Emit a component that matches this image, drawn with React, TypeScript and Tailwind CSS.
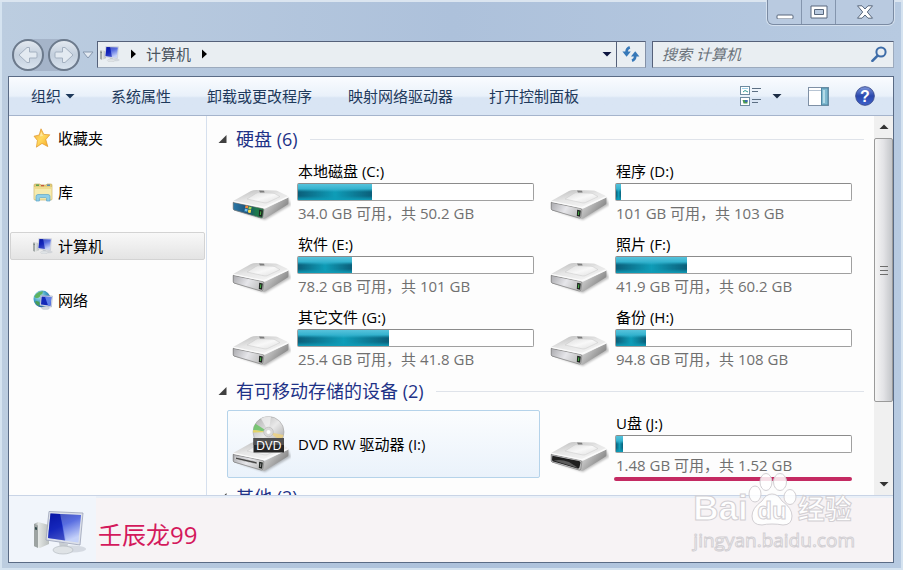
import React from "react";
import clsx from "clsx";

type DriveKind = "system" | "disk" | "removable" | "dvd";

interface Drive {
  name: string;
  kind: DriveKind;
  used?: number;
  info?: string;
  hovered?: boolean;
  marked?: boolean;
}

const hardDisks: Drive[] = [
  { name: "本地磁盘 (C:)", kind: "system", used: 31.5, info: "34.0 GB 可用，共 50.2 GB" },
  { name: "程序 (D:)", kind: "disk", used: 2, info: "101 GB 可用，共 103 GB" },
  { name: "软件 (E:)", kind: "disk", used: 23, info: "78.2 GB 可用，共 101 GB" },
  { name: "照片 (F:)", kind: "disk", used: 30, info: "41.9 GB 可用，共 60.2 GB" },
  { name: "其它文件 (G:)", kind: "disk", used: 38.8, info: "25.4 GB 可用，共 41.8 GB" },
  { name: "备份 (H:)", kind: "disk", used: 12.8, info: "94.8 GB 可用，共 108 GB" },
];

const removable: Drive[] = [
  { name: "DVD RW 驱动器 (I:)", kind: "dvd", hovered: true },
  { name: "U盘 (J:)", kind: "removable", used: 3, info: "1.48 GB 可用，共 1.52 GB", marked: true },
];

/* ---------- Icons ---------- */

const ComputerIcon = ({ className }: { className?: string }) => (
  <svg viewBox="0 0 54 44" className={className} aria-hidden="true">
    <defs>
      <linearGradient id="screen" x1="0" y1="0" x2="0.5" y2="1">
        <stop offset="0" stopColor="#0a1a9c" />
        <stop offset="0.5" stopColor="#2a45d8" />
        <stop offset="1" stopColor="#b4c4f8" />
      </linearGradient>
      <linearGradient id="tower" x1="0" y1="0" x2="1" y2="0">
        <stop offset="0" stopColor="#8e9494" />
        <stop offset="0.3" stopColor="#e4e7e5" />
        <stop offset="1" stopColor="#b9bebd" />
      </linearGradient>
    </defs>
    <ellipse cx="39" cy="38" rx="14" ry="3.5" fill="#b9c0ca" opacity="0.5" />
    <path d="M1 13 L5 11 L16 14 L16 33 L7 37 L1 35 Z" fill="url(#tower)" />
    <path d="M1 13 L5 14.5 L5 37 L1 35 Z" fill="#9da3a2" />
    <path d="M2 16 L4 16.6 L4 19 L2 18.4 Z" fill="#31494a" />
    <path d="M26 31 L35 33 L34 38 L27 38 Z" fill="#c8cdd2" />
    <ellipse cx="30" cy="39" rx="10" ry="4" fill="#dfe3e6" stroke="#aeb5bb" strokeWidth="0.6" />
    <path d="M16 0.5 L50 2 L47 34 L13 29 Z" fill="#dde1ea" stroke="#9aa2b8" strokeWidth="0.8" />
    <path d="M17.5 2.5 L48 4 L45.3 31.5 L15 27 Z" fill="url(#screen)" />
    <path d="M27 3 L48 4 L45.3 31.5 L33 29.6 Z" fill="#ffffff" opacity="0.22" />
    <path d="M17.5 2.5 L27 3 L32 29.5 L15 27 Z" fill="#0612a8" opacity="0.6" />
  </svg>
);

const StarIcon = () => (
  <svg viewBox="0 0 20 20" className="size-5" aria-hidden="true">
    <defs>
      <linearGradient id="star" x1="0" y1="0" x2="1" y2="1">
        <stop offset="0" stopColor="#f3a93c" />
        <stop offset="0.5" stopColor="#ffd95e" />
        <stop offset="1" stopColor="#f5a21c" />
      </linearGradient>
    </defs>
    <path
      d="M8 0.8 L10.8 6.4 L16.8 6.8 L12.8 11.6 L14.8 18.6 L9 15.4 L3.4 19.2 L4.4 12.4 L1 8.2 L6.2 7 Z"
      fill="url(#star)"
      stroke="#e0962a"
      strokeWidth="0.7"
      strokeLinejoin="round"
    />
    <path d="M8.2 3.5 L10 8 L6.8 8.6 Z" fill="#ffeeb0" opacity="0.8" />
  </svg>
);

const LibraryIcon = () => (
  <svg viewBox="0 0 20 20" className="size-5" aria-hidden="true">
    <path d="M1 3 Q1 2 2 2 H7 L8 3 H13 L14 2 H18 Q19 2 19 3 V17 Q19 18 18 18 H2 Q1 18 1 17 Z" fill="#e3cd7d" stroke="#c3a859" strokeWidth="0.6" />
    <path d="M3 3.2 H6" stroke="#4f9c4d" strokeWidth="1.4" />
    <path d="M8 3.6 H11" stroke="#c75a3c" strokeWidth="1.4" />
    <path d="M14 3.2 H17" stroke="#4d86b8" strokeWidth="1.4" />
    <path d="M1.4 5 H18.6 V17 Q18.6 17.6 18 17.6 H2 Q1.4 17.6 1.4 17 Z" fill="#f6ebaf" />
    <path d="M1.4 5 H18.6 V7 H1.4 Z" fill="#eedc8f" />
    <path d="M3 19 V14.5 Q3 12.5 5 12.5 H15 Q17 12.5 17 14.5 V19 H13.6 V16.6 Q13.6 15.6 12.6 15.6 H7.4 Q6.4 15.6 6.4 16.6 V19 Z" fill="#8fcfe8" stroke="#5aa5c8" strokeWidth="0.7" />
  </svg>
);

const NetworkIcon = () => (
  <svg viewBox="0 0 20 20" className="size-5" aria-hidden="true">
    <defs>
      <radialGradient id="globe" cx="0.35" cy="0.3" r="0.8">
        <stop offset="0" stopColor="#c3ecf5" />
        <stop offset="0.5" stopColor="#3f9fc4" />
        <stop offset="1" stopColor="#1b4d8f" />
      </radialGradient>
    </defs>
    <circle cx="9" cy="9" r="8.5" fill="url(#globe)" />
    <path d="M3 4 Q6 1 10 1.2 Q10 4 7.5 5 Q7 8 4 8 Q2 8 1.4 6.5 Z" fill="#5cb260" />
    <path d="M3 11 Q6 11 7 13 Q6.6 15 5.6 16 Q3 14.4 2 12 Z" fill="#4a9e58" />
    <path d="M7.6 5.4 L19.4 6 L18.4 17 L7 15.4 Z" fill="#dfe5ee" stroke="#8e9ab5" strokeWidth="0.5" />
    <path d="M8.6 6.4 L18.4 7 L17.5 15.8 L8 14.5 Z" fill="#1429b8" />
    <path d="M12 6.7 L18.4 7 L17.5 15.8 L15 15.4 Z" fill="#5f7fe8" />
    <ellipse cx="12.5" cy="18" rx="4" ry="1.5" fill="#d5dadf" stroke="#aab2bb" strokeWidth="0.3" />
  </svg>
);

const DriveIcon = ({ kind }: { kind: DriveKind }) => (
  <svg viewBox="0 0 60 60" className="size-[60px] shrink-0" aria-hidden="true">
    <defs>
      <linearGradient id="driveTop" x1="0" y1="0" x2="0.6" y2="1">
        <stop offset="0" stopColor="#b9b9b9" />
        <stop offset="0.5" stopColor="#e6e6e6" />
        <stop offset="1" stopColor="#f4f4f4" />
      </linearGradient>
      <linearGradient id="driveLid" x1="0" y1="0" x2="1" y2="1">
        <stop offset="0" stopColor="#dcdcdc" />
        <stop offset="0.5" stopColor="#f8f8f8" />
        <stop offset="1" stopColor="#dedede" />
      </linearGradient>
      <linearGradient id="driveSide" x1="0" y1="0" x2="1" y2="0.3">
        <stop offset="0" stopColor="#6f6f6f" />
        <stop offset="0.25" stopColor="#a9a9a9" />
        <stop offset="0.6" stopColor="#d4d4d4" />
        <stop offset="1" stopColor="#8b8b8b" />
      </linearGradient>
      <linearGradient id="driveFront" x1="0" y1="0" x2="1" y2="0.3">
        <stop offset="0" stopColor="#a9a9ad" />
        <stop offset="0.55" stopColor="#e6e6ea" />
        <stop offset="1" stopColor="#c2c2c2" />
      </linearGradient>
      <linearGradient id="systemFront" x1="0" y1="0" x2="1" y2="0">
        <stop offset="0" stopColor="#2c78a8" />
        <stop offset="0.5" stopColor="#1a4f74" />
        <stop offset="0.75" stopColor="#1d7a4c" />
        <stop offset="1" stopColor="#2b6f46" />
      </linearGradient>
      <linearGradient id="disc" x1="0" y1="0" x2="1" y2="1">
        <stop offset="0" stopColor="#a9a9a9" />
        <stop offset="0.5" stopColor="#e9e9e9" />
        <stop offset="1" stopColor="#999999" />
      </linearGradient>
      <filter id="driveShadow" x="-20%" y="-20%" width="140%" height="140%">
        <feGaussianBlur stdDeviation="1" />
      </filter>
    </defs>
    <g transform="translate(0 26)">
      <path d="M6 23 L34 32 L60 17 L57 10 L30 26 Z" fill="#000" opacity="0.25" filter="url(#driveShadow)" />
      <path d="M2 14 Q2 13 3 12.4 L20 3 Q22 2 25 2 L44 2.6 Q46 2.7 47.5 3.4 L56 7.6 Q57.4 8.4 57.4 10 L33 20.6 Z" fill="url(#driveTop)" />
      <path d="M2 14 L33 20.6 Q34 20.8 35 20.2 L57.4 9.4 L57.4 15 Q57.4 16.2 56.4 16.8 L35 30 Q33.4 31 31.6 30.4 L3.4 22.4 Q2 22 2 20.6 Z" fill="url(#driveSide)" />
      <path d="M16 11 L25 5.4 Q26 4.8 27.5 4.8 L42 5.2 Q43 5.2 44 5.8 L49 8.6 L36.5 14.6 Q35 15.2 33.5 14.9 Z" fill="url(#driveLid)" stroke="#c9c9c9" strokeWidth="0.5" />
      <path d="M28 2.6 L33 2.8 L33.6 4.6 L29 4.4 Z" fill="#7d7d7d" />
      <path
        d="M2.2 14.4 L31.6 20.4 Q33 20.8 32.8 22.2 L31.8 29 Q31.6 30.4 30 30 L3.6 22.2 Q2.2 21.8 2.2 20.4 Z"
        fill={kind === "system" ? "url(#systemFront)" : "url(#driveFront)"}
        stroke="#808080"
        strokeWidth="0.7"
      />
      <path d="M2.4 13.4 L33 19.7 L57 8.8" fill="none" stroke="#fbfbfb" strokeWidth="1.3" strokeLinejoin="round" />
      {kind === "system" && (
        <g>
          <path d="M14.5 17.6 Q16 17 17.2 18 L16.8 20.6 Q15.4 19.8 14 20.2 Z" fill="#f08a3c" />
          <path d="M17.8 18.2 Q19.2 19.2 20.6 18.8 L20.2 21.4 Q18.8 21.8 17.4 20.9 Z" fill="#a5d84c" />
          <path d="M13.9 20.8 Q15.4 20.4 16.7 21.3 L16.3 23.8 Q15 23 13.5 23.4 Z" fill="#6cc1ee" />
          <path d="M17.3 21.5 Q18.7 22.4 20.1 22 L19.7 24.8 Q18.2 25.2 16.9 24.2 Z" fill="#fbdc4a" />
        </g>
      )}
      {kind === "removable" && (
        <g>
          <path d="M3.4 15.8 L30 21 Q31.8 21.4 31.5 22.8 L30.4 27.6 Q30 28.8 28.4 28.4 L4.4 21.6 Q3 21 3 19.6 Z" fill="#1f1f1f" />
          <path d="M4.6 20.6 Q12 19 20 22 L28.6 27.4 Q28 27.8 27 27.4 Z" fill="#5c5c5c" />
        </g>
      )}
      {kind === "dvd" && (
        <path d="M4.5 17 L26 21.8 L26 24.2 L4.5 19.2 Z" fill="#444" stroke="#f1f1f1" strokeWidth="0.6" />
      )}
      {kind !== "removable" && (
        <g>
          <path d="M28.2 21.8 L31.8 22.6 L31 28.8 L27.8 28 Z" fill="#1f2420" />
          <path d="M29.8 23.4 L29.4 27" stroke={kind === "dvd" ? "#8b8b8b" : "#43a843"} strokeWidth="1.1" />
        </g>
      )}
    </g>
    {kind === "dvd" && (
      <g>
        <circle cx="37.5" cy="18" r="15.5" fill="url(#disc)" stroke="#a3a3a3" strokeWidth="0.6" />
        <path d="M37.5 18 L22.2 16 A15.5 15.5 0 0 1 24.4 9.8 Z" fill="#6fc46a" opacity="0.9" />
        <path d="M37.5 18 L22 18.6 A15.5 15.5 0 0 1 22.2 16 Z" fill="#e6d65c" opacity="0.9" />
        <path d="M37.5 18 L30 4.4 A15.5 15.5 0 0 1 40 2.7 Z" fill="#f4f4f4" opacity="0.7" />
        <path d="M37.5 18 L52.6 21 L50 27 Z" fill="#f0d27a" opacity="0.8" />
        <circle cx="37.5" cy="18" r="4.8" fill="#d9d9d9" stroke="#b3b3b3" strokeWidth="0.6" />
        <circle cx="37.5" cy="18" r="2" fill="#ffffff" />
        <rect x="22.5" y="24" width="30.5" height="14.5" fill="#262626" />
        <rect x="22.5" y="24" width="30.5" height="7" fill="#505050" />
        <text x="37.8" y="35.6" textAnchor="middle" fontSize="12.5" fill="#ffffff" fontFamily="Open Sans, sans-serif">
          DVD
        </text>
      </g>
    )}
  </svg>
);

const Triangle = ({ dir, className }: { dir: "down" | "right" | "up"; className?: string }) => (
  <svg viewBox="0 0 10 10" className={clsx("size-[10px] shrink-0", className)} fill="currentColor" aria-hidden="true">
    {dir === "down" && <path d="M0.5 3 H9.5 L5 7.6 Z" />}
    {dir === "right" && <path d="M3 0.5 V9.5 L8 5 Z" />}
    {dir === "up" && <path d="M0.5 7 H9.5 L5 2.6 Z" />}
  </svg>
);

/* ---------- Window chrome ---------- */

const TitleBar = () => (
  <header className="flex h-10 items-start justify-end">
    <div className="flex h-[25px] rounded-b-md border border-t-0 border-[#7b8ba3] bg-[#b9cae0] shadow-[0_0_0_1px_#d5e1ef]">
      <button aria-label="最小化" className="flex w-[34px] items-center justify-center border-r border-[#8495ad]">
        <svg viewBox="0 0 18 14" className="w-[18px]">
          <rect x="1" y="10" width="16" height="4" rx="1" fill="#fff" stroke="#58677c" />
        </svg>
      </button>
      <button aria-label="最大化" className="flex w-[34px] items-center justify-center border-r border-[#8495ad]">
        <svg viewBox="0 0 18 14" className="w-[18px]">
          <path d="M1 1 H17 V13 H1 Z M4.5 4.5 V9.5 H13.5 V4.5 Z" fill="#fff" fillRule="evenodd" stroke="#58677c" />
        </svg>
      </button>
      <button aria-label="关闭" className="flex w-[57px] items-center justify-center">
        <svg viewBox="0 0 18 14" className="w-[18px]">
          <path
            d="M1.5 0.8 H6 L9 4 L12 0.8 H16.5 L11.3 7 L16.5 13.2 H12 L9 10 L6 13.2 H1.5 L6.7 7 Z"
            fill="#fff"
            stroke="#58677c"
            strokeLinejoin="round"
          />
        </svg>
      </button>
    </div>
  </header>
);

const RoundButton = ({ label, flip }: { label: string; flip?: boolean }) => (
  <button
    aria-label={label}
    className="flex size-8 items-center justify-center rounded-full border-2 border-[#6c7a8c] bg-linear-to-b from-[#e3e9f0] via-[#c3cfdd] to-[#d9e3ee]"
  >
    <svg viewBox="0 0 20 18" className={clsx("w-5", flip && "rotate-180")}>
      <path
        d="M1 9 L9 1.5 H11.5 V6 H18 Q19 6 19 7 V11 Q19 12 18 12 H11.5 V16.5 H9 Z"
        fill="#e3eaf1"
        stroke="#a3b0c0"
        strokeLinejoin="round"
      />
    </svg>
  </button>
);

const NavBar = () => (
  <div className="flex h-[30px] items-center pl-1">
    <div className="flex shrink-0 items-center gap-1 rounded-full bg-[#a5b4c9]">
      <RoundButton label="后退" />
      <RoundButton label="前进" flip />
    </div>
    <button aria-label="最近浏览的位置" className="mx-px w-[14px]">
      <svg viewBox="0 0 14 10" className="w-[14px]">
        <path d="M2 2 H12 L7 8 Z" fill="#e3eaf2" stroke="#8798af" />
      </svg>
    </button>
    <div className="mt-[-2px] ml-px flex h-[27px] min-w-0 flex-1 items-center border border-t-[#55617a] border-r-[#8491a7] border-b-[#9caabd] border-l-[#55617a] bg-[#e9eef2] pl-[2px] text-[15px] text-[#4b5560]">
      <ComputerIcon className="w-5" />
      <Triangle dir="right" className="mx-2 text-black" />
      <button>计算机</button>
      <Triangle dir="right" className="mx-2 text-black" />
      <button aria-label="以前的位置" className="mr-1 ml-auto">
        <Triangle dir="down" className="text-[#0d1540]" />
      </button>
      <button aria-label="刷新" className="flex h-full w-[29px] items-center justify-center border-l border-[#55617a]">
        <svg viewBox="0 0 18 16" className="w-[18px]" fill="none" stroke="#3678b8" strokeWidth="2.6">
          <path d="M7.8 1.2 Q4.6 2.4 4.6 5.5 V6" />
          <path d="M0.4 5.4 H8.8 L4.6 10.8 Z" fill="#3678b8" stroke="none" />
          <path d="M10 14.8 Q13.2 13.6 13.2 10.5 V10" />
          <path d="M9 10.6 H17.4 L13.2 5.2 Z" fill="#3678b8" stroke="none" />
        </svg>
      </button>
    </div>
    <label className="mt-[-2px] ml-[6px] flex h-[27px] w-[242px] shrink-0 items-center border border-t-[#55617a] border-r-[#9caabd] border-b-[#9caabd] border-l-[#55617a] bg-[#e9eef2] pr-[6px] pl-[9px]">
      <input
        type="text"
        aria-label="搜索 计算机"
        placeholder="搜索 计算机"
        className="min-w-0 flex-1 bg-transparent text-[15px] italic outline-none placeholder:text-[#6b737b]"
      />
      <svg viewBox="0 0 16 16" className="size-4" fill="none" stroke="#3d6ca8" aria-hidden="true">
        <circle cx="10" cy="6" r="4.6" strokeWidth="2" />
        <path d="M6.6 9.6 L1.4 14.8" strokeWidth="2.6" strokeLinecap="round" />
      </svg>
    </label>
  </div>
);

const Toolbar = () => (
  <div className="flex h-[39px] shrink-0 items-center gap-9 border-b border-[#a5b4cc] bg-linear-to-b from-[#fafcff] from-0% via-[#e9f1fa] via-50% to-[#d9e5f4] to-55% pr-[18px] pl-[22px] text-[15px] whitespace-nowrap text-[#1e395b]">
    <button className="flex items-center gap-1">
      组织
      <Triangle dir="down" />
    </button>
    <button>系统属性</button>
    <button>卸载或更改程序</button>
    <button>映射网络驱动器</button>
    <button>打开控制面板</button>
    <div className="ml-auto flex items-center">
      <button aria-label="更改您的视图" className="flex items-center gap-[10px]">
        <svg viewBox="0 0 22 20" className="w-[22px]">
          <rect x="0.5" y="0.5" width="9" height="8" fill="#fff" stroke="#6d8aa0" />
          <rect x="0.5" y="11.5" width="9" height="8" fill="#fff" stroke="#6d8aa0" />
          <path d="M2 2.5 H8" stroke="#9ed2ea" />
          <path d="M3 6 L5 4.5 L8 6" stroke="#2f9a93" fill="none" />
          <path d="M2.5 14 H7.5 V17.5 H3.5 Z" fill="#4a9a56" />
          <path d="M5 14 H7.5 V16 H5 Z" fill="#3d68b5" />
          <path d="M12 2.5 H21 M12 5.5 H18 M12 13.5 H21 M12 16.5 H18" stroke="#5c6f84" />
        </svg>
        <Triangle dir="down" className="text-[#1c2c44]" />
      </button>
      <button aria-label="显示预览窗格" className="ml-[26px]">
        <svg viewBox="0 0 21 19" className="w-[21px]">
          <rect x="0.5" y="0.5" width="20" height="18" fill="#fff" stroke="#7f90a5" />
          <path d="M1 3.5 H20" stroke="#b7c4d3" />
          <rect x="13.5" y="1" width="6.5" height="17" fill="#7fb9d0" stroke="#4f87a3" />
          <rect x="15" y="3" width="2" height="13" fill="#b4dbe8" />
        </svg>
      </button>
      <button aria-label="获取帮助" className="ml-[26px]">
        <svg viewBox="0 0 20 20" className="w-5">
          <defs>
            <linearGradient id="help" x1="0" y1="0" x2="0" y2="1">
              <stop offset="0" stopColor="#7e97dc" />
              <stop offset="0.5" stopColor="#2947ad" />
              <stop offset="1" stopColor="#3f62cc" />
            </linearGradient>
          </defs>
          <circle cx="10" cy="10" r="9.3" fill="url(#help)" stroke="#3d4f91" />
          <text x="10" y="15.6" textAnchor="middle" fontSize="16" fontWeight="bold" fill="#fff" fontFamily="Liberation Sans, sans-serif">
            ?
          </text>
        </svg>
      </button>
    </div>
  </div>
);

/* ---------- Content ---------- */

const places = [
  { label: "收藏夹", icon: <StarIcon /> },
  { label: "库", icon: <LibraryIcon /> },
  { label: "计算机", icon: <ComputerIcon className="w-5" />, active: true },
  { label: "网络", icon: <NetworkIcon /> },
];

const Sidebar = () => (
  <nav className="flex w-[198px] shrink-0 flex-col gap-[26px] border-r border-[#d6e0ee] px-px pt-2">
    {places.map((place) => (
      <a
        key={place.label}
        href="#"
        className={clsx(
          "flex h-7 items-center gap-[5px] rounded-xs border pl-[22px] text-[15px] text-black",
          place.active ? "border-[#d3d3d3] bg-linear-to-b from-[#f8f8f8] to-[#e4e4e4]" : "border-transparent",
        )}
      >
        {place.icon}
        {place.label}
      </a>
    ))}
  </nav>
);

const DriveTile = ({ drive }: { drive: Drive }) => (
  <li
    className={clsx(
      "relative flex h-[68px] w-[313px] items-center gap-[6px] rounded-xs border pl-[3px]",
      drive.hovered ? "border-[#b5d3ea] bg-linear-to-b from-[#fbfdfe] to-[#eaf2fb]" : "border-transparent",
    )}
  >
    <DriveIcon kind={drive.kind} />
    <div className="w-[237px]">
      <div className="pl-px text-[15px] leading-5 text-black">{drive.name}</div>
      {drive.used !== undefined && (
        <div
          role="meter"
          aria-label={drive.name}
          aria-valuenow={drive.used}
          className="my-[2px] h-[18px] rounded-xs border border-[#a0a0a0] border-t-[#8b8b8b] bg-white"
        >
          <div
            className="h-full bg-linear-to-b from-[#56c3dc] from-0% via-[#2db0cc] via-35% to-[#0f9db8] to-50%"
            style={{ width: `${drive.used}%` }}
          >
            <div className="h-full bg-linear-to-r from-[#0a4f6a]/80 via-transparent to-[#0a4f6a]/80 [mask-image:linear-gradient(transparent_30%,black_50%,black_75%,transparent)]" />
          </div>
        </div>
      )}
      {drive.info && <div className="pl-px text-[15px] leading-5 text-[#707070]">{drive.info}</div>}
    </div>
    {drive.marked && <span className="absolute top-[66px] right-[5px] h-1 w-[238px] rounded-xs bg-[#c42a62]" />}
  </li>
);

const Group = ({ title, drives }: { title: string; drives: Drive[] }) => (
  <section>
    <h2 className="flex h-[38px] items-center text-[18px] text-[#1e3287]">
      <svg viewBox="0 0 10 10" className="mr-2 size-[10px]" aria-hidden="true">
        <path d="M8.5 1 V9 H0.5 Z" fill="#404040" />
      </svg>
      {title}
      <span className="ml-3 h-px flex-1 bg-[#dfe3ea]" />
    </h2>
    <ul className="flex flex-wrap gap-[5px] pl-[9px]">
      {drives.map((drive) => (
        <DriveTile key={drive.name} drive={drive} />
      ))}
    </ul>
  </section>
);

const ScrollBar = () => (
  <div className="flex w-[19px] shrink-0 flex-col items-center bg-[#f0f0f0]">
    <div className="flex h-[22px] items-center">
      <Triangle dir="up" className="text-[#333]" />
    </div>
    <div className="flex w-full flex-[264] items-center justify-center rounded-xs border border-[#9a9a9a] bg-linear-to-r from-[#f5f5f5] via-[#e3e3e6] to-[#c4c6ca]">
      <svg viewBox="0 0 8 10" className="w-2" stroke="#6d6d6d" aria-hidden="true">
        <path d="M0 1.5 H8 M0 5.5 H8 M0 9.5 H8" />
      </svg>
    </div>
    <div className="flex-[71]" />
    <div className="flex h-[22px] items-center">
      <Triangle dir="down" className="text-[#333]" />
    </div>
  </div>
);

const Watermark = () => (
  <div className="pointer-events-none absolute right-[38px] bottom-2 text-white/90 [-webkit-text-stroke:1px_#d2cfd3]">
    <div className="flex h-[52px] items-end font-[Liberation_Sans] text-[35px] leading-9 font-bold">
      <span>Bai</span>
      <svg viewBox="0 0 50 54" className="w-[50px]" fill="#ffffff" fillOpacity="0.85" stroke="#d2cfd3">
        <ellipse cx="7" cy="22" rx="6" ry="8" />
        <ellipse cx="18" cy="10" rx="6" ry="8.5" />
        <ellipse cx="32" cy="10" rx="6.5" ry="8.5" />
        <ellipse cx="42" cy="25" rx="6" ry="7.5" />
        <path d="M24 22 Q30 22 34 29 Q44 36 44 44 Q44 53 35 53 Q30 52 24 52 Q18 52 14 53 Q4 53 4 44 Q4 36 14 29 Q18 22 24 22 Z" />
        <text x="24" y="47" textAnchor="middle" fontSize="24" fontWeight="bold" fontFamily="Liberation Sans, sans-serif">
          du
        </text>
      </svg>
      <span className="font-['Noto_Sans_CJK_SC'] text-[27px]">经验</span>
    </div>
    <div className="text-[19px] leading-7">jingyan.baidu.com</div>
  </div>
);

const DetailsPane = () => (
  <footer className="relative flex h-[67px] shrink-0 items-center border-t border-[#c9d4e6] bg-[#f7f3f5] shadow-[inset_0_2px_0_#eaf0f8]">
    <div className="flex h-full w-[87px] items-center bg-[#f1f5fb] pt-2 pl-6">
      <ComputerIcon className="w-[54px]" />
    </div>
    <span className="pt-3 pl-[2px] text-[24px] text-[#d4195c]">壬辰龙99</span>
    <Watermark />
  </footer>
);

const App = () => {
  return (
    <div className="flex h-screen flex-col bg-linear-to-r from-[#bccde0] via-[#adc1db] to-[#b7cae1] pr-[9px] pb-[7px] pl-2 font-['Open_Sans','Noto_Sans_CJK_SC',sans-serif] shadow-[inset_0_2px_0_#dbe5f0,inset_2px_0_0_#d5e3f0,inset_-2px_0_0_#d5e3f0,inset_0_-2px_0_#d5e3f0]">
      <TitleBar />
      <NavBar />
      <div className="mt-[6px] flex min-h-0 flex-1 flex-col border border-[#5a6b85] bg-[#fdfdfd]">
        <Toolbar />
        <div className="flex min-h-0 flex-1">
          <Sidebar />
          <main className="min-w-0 flex-1 overflow-hidden pt-1 pr-[10px] pl-[11px]">
            <Group title="硬盘 (6)" drives={hardDisks} />
            <Group title="有可移动存储的设备 (2)" drives={removable} />
            <Group title="其他 (2)" drives={[]} />
          </main>
          <ScrollBar />
        </div>
        <DetailsPane />
      </div>
    </div>
  );
};

export default App;
